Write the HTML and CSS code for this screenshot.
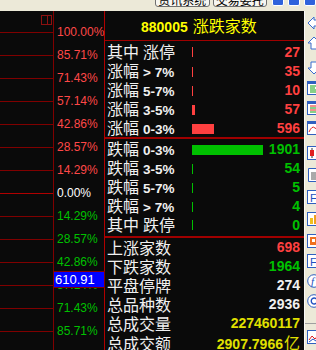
FILE: index.html
```html
<!DOCTYPE html>
<html lang="zh-CN">
<head>
  <meta charset="UTF-8" />
  <title>涨跌家数</title>
  <link rel="stylesheet" href="styles.css">
</head>
<body>
<div class="topbar">
  <span class="btn b1">资讯系统</span>
  <span class="btn b2">交易委托</span>
  <span class="winbtns"><i></i><i></i><i></i></span>
</div>
<div class="main">
  <div class="chart">
    <div class="sel"><span></span></div>
    <div class="grid">
      <div></div><div></div><div></div><div></div><div></div><div></div><div></div>
      <div class="mid"></div><div></div><div></div><div></div><div></div><div></div><div></div>
    </div>
  </div>
  <div class="scale">
    <div class="up">100.00%</div>
    <div class="up">85.71%</div>
    <div class="up">71.43%</div>
    <div class="up">57.14%</div>
    <div class="up">42.86%</div>
    <div class="up">28.57%</div>
    <div class="up">14.29%</div>
    <div class="zero">0.00%</div>
    <div class="dn">14.29%</div>
    <div class="dn">28.57%</div>
    <div class="dn">42.86%</div>
    <div class="dn">57.14%</div>
    <div class="dn">71.43%</div>
    <div class="dn">85.71%</div>
    <div class="cursor">610.91</div>
  </div>
  <div class="panel">
    <div class="head"><b>880005</b><span class="cn">涨跌家数</span></div>
    <div class="sec s1">
      <div class="row"><span><span class="cn">其中</span><span class="cn sp">涨停</span></span><i class="bar red" style="width:1px"></i><b class="num red">27</b></div>
      <div class="row"><span><span class="cn">涨幅</span><b class="rng">&gt; 7%</b></span><i class="bar red" style="width:1px"></i><b class="num red">35</b></div>
      <div class="row"><span><span class="cn">涨幅</span><b class="rng">5-7%</b></span><i class="bar red" style="width:1px"></i><b class="num red">10</b></div>
      <div class="row"><span><span class="cn">涨幅</span><b class="rng">3-5%</b></span><i class="bar red" style="width:3px"></i><b class="num red">57</b></div>
      <div class="row"><span><span class="cn">涨幅</span><b class="rng">0-3%</b></span><i class="bar red" style="width:22px"></i><b class="num red">596</b></div>
    </div>
    <div class="sec s2">
      <div class="row"><span><span class="cn">跌幅</span><b class="rng">0-3%</b></span><i class="bar green" style="width:71px"></i><b class="num green">1901</b></div>
      <div class="row"><span><span class="cn">跌幅</span><b class="rng">3-5%</b></span><i class="bar green" style="width:1px"></i><b class="num green">54</b></div>
      <div class="row"><span><span class="cn">跌幅</span><b class="rng">5-7%</b></span><i class="bar green" style="width:1px"></i><b class="num green">5</b></div>
      <div class="row"><span><span class="cn">跌幅</span><b class="rng">&gt; 7%</b></span><i class="bar green" style="width:1px"></i><b class="num green">4</b></div>
      <div class="row"><span><span class="cn">其中</span><span class="cn sp">跌停</span></span><i class="bar green" style="width:1px"></i><b class="num green">0</b></div>
    </div>
    <div class="sec s3">
      <div class="row sum"><span class="cn">上涨家数</span><b class="num red">698</b></div>
      <div class="row sum"><span class="cn">下跌家数</span><b class="num green">1964</b></div>
      <div class="row sum"><span class="cn">平盘停牌</span><b class="num white">274</b></div>
      <div class="row sum"><span class="cn">总品种数</span><b class="num white">2936</b></div>
      <div class="row sum"><span class="cn">总成交量</span><b class="num yellow">227460117</b></div>
      <div class="row sum"><span class="cn">总成交额</span><b class="num yellow">2907.7966<span class="cn">亿</span></b></div>
    </div>
  </div>
  <div class="tools">
    <svg viewBox="0 0 14 14"><path d="M1 7L7 1V4H13V10H7V13Z" fill="#fff" stroke="#3a6cd0"/></svg>
    <svg viewBox="0 0 14 14"><path d="M7 1L13 7H10V13H4V7H1Z" fill="#fff" stroke="#3a6cd0"/></svg>
    <svg class="g" viewBox="0 0 14 14"><path d="M4 1H10V7H13L7 13L1 7H4Z" fill="#fff" stroke="#3a6cd0"/></svg>
    <svg viewBox="0 0 14 14"><rect x="0.5" y="0.5" width="13" height="13" fill="#fff" stroke="#3060c0"/><rect x="1" y="1" width="12" height="2" fill="#3060c0"/><path d="M3 5H10M3 7H8M3 9H11M3 11H9" stroke="#10a010"/></svg>
    <svg viewBox="0 0 14 14"><rect x="0.5" y="0.5" width="13" height="13" fill="#fff" stroke="#3060c0"/><rect x="1" y="1" width="12" height="2" fill="#3060c0"/><path d="M3 5H10M3 9H10" stroke="#e02020"/><path d="M3 7H10M3 11H10" stroke="#10a010"/></svg>
    <svg viewBox="0 0 14 14"><rect x="0.5" y="0.5" width="13" height="13" fill="#fff" stroke="#3060c0"/><rect x="1" y="1" width="12" height="2" fill="#3060c0"/><path d="M2 11Q5 4 8 7T13 8" fill="none" stroke="#e02020"/></svg>
    <svg class="g" viewBox="0 0 14 14"><rect x="0.5" y="0.5" width="13" height="13" fill="#fff" stroke="#3060c0"/><path d="M5 2V12" stroke="#333"/><rect x="3" y="4" width="4" height="6" fill="#e02020"/><rect x="9" y="5" width="3" height="5" fill="#10a010"/></svg>
    <svg class="g2" viewBox="0 0 14 14"><path d="M1.5 0.5H10L12.5 3V13.5H1.5Z" fill="#fff" stroke="#3060c0"/><path d="M4 5H10M4 7H10M4 9H10M4 11H9" stroke="#555"/></svg>
    <svg class="g2" viewBox="0 0 14 14"><rect x="0.5" y="0.5" width="13" height="13" fill="#fff" stroke="#3060c0"/><text x="3" y="11.5" font-family="Liberation Sans" font-size="11" fill="#2050c0">F</text></svg>
    <svg class="g2" viewBox="0 0 14 14"><rect x="0.5" y="0.5" width="13" height="13" fill="#fff" stroke="#3060c0"/><rect x="3" y="6" width="3" height="6" fill="#f0c020"/><rect x="7" y="3" width="3" height="9" fill="#f0a020"/></svg>
    <svg class="g2" viewBox="0 0 14 14"><rect x="0.5" y="0.5" width="13" height="13" fill="#fff" stroke="#3060c0"/><rect x="3" y="3" width="7" height="8" fill="#f07020"/><rect x="5" y="5" width="3" height="3" fill="#fff"/></svg>
    <svg viewBox="0 0 14 14"><rect x="0.5" y="0.5" width="13" height="13" fill="#fff" stroke="#3060c0"/><text x="3" y="11.5" font-family="Liberation Sans" font-size="11" fill="#2050c0">F</text></svg>
    <svg viewBox="0 0 14 14"><circle cx="7" cy="7" r="6.3" fill="#fff" stroke="#3060c0"/><text x="4" y="11" font-family="Liberation Serif" font-style="italic" font-size="11" fill="#2050c0">f</text></svg>
    <svg viewBox="0 0 14 14"><circle cx="7" cy="7" r="6.3" fill="#fff" stroke="#3060c0"/><path d="M9.5 5A3 3 0 1 0 9.5 9" fill="none" stroke="#2050c0" stroke-width="1.4"/></svg>
    <span class="sep"></span>
    <svg viewBox="0 0 14 14"><rect x="0.5" y="0.5" width="13" height="13" fill="#fff" stroke="#3060c0"/><path d="M2 10L5 6L8 9L12 4" fill="none" stroke="#e02020"/><path d="M2 12L6 9L9 11L12 8" fill="none" stroke="#2050c0"/></svg>
  </div>
</div>
</body>
</html>
```

FILE: styles.css
```css
* {
  box-sizing: border-box;
}
body {
  margin: 0;
  width: 316px;
  height: 350px;
  overflow: hidden;
  background: #0a0a0a;
  font-family: "Liberation Sans", Arial, sans-serif;
}
.cn {
  font-family: "Noto Sans CJK SC", sans-serif;
  font-size: 16px;
  font-weight: normal;
}

/* window strip */
.topbar {
  height: 11px;
  background: #ece9d8;
  display: flex;
  align-items: flex-start;
  overflow: hidden;
}
.btn {
  width: 57px;
  height: 20px;
  margin-top: -13px;
  padding-top: 6px;
  border: 1px solid #6f6f6f;
  border-radius: 3px;
  background: #f7f6f1;
  color: #000;
  font: 12px/12px "Noto Sans CJK SC", sans-serif;
  text-align: center;
}
.b1 { margin-left: 155px; }
.b2 { margin-left: 3px; }
.winbtns {
  display: flex;
  gap: 4px;
  margin-left: 5px;
}
.winbtns i {
  width: 12px;
  height: 13px;
  margin-top: -7px;
  background: #2f62dc;
  border: 1px solid #fff;
  border-radius: 2px;
}

.main {
  display: flex;
  height: 339px;
}

/* chart grid on the left */
.chart {
  width: 54px;
  border-right: 1px solid #800000;
}
.sel {
  width: 11px;
  height: 10px;
  margin: 4px 0 0 41px;
  border: 1px solid #8c1010;
}
.sel span {
  display: block;
  width: 6px;
  height: 100%;
  border-right: 1px solid #8c1010;
}
.grid {
  margin-top: 7px;
}
.grid div {
  height: 23px;
  border-top: 1px solid #800000;
}
.grid .mid {
  border-top-color: #b00000;
}

/* percent scale */
.scale {
  width: 50px;
  position: relative;
  padding: 10px 0 0 3px;
  font-size: 12px;
}
.scale div {
  height: 23px;
  line-height: 23px;
  white-space: nowrap;
}
.up { color: #ff4848; }
.dn { color: #00c000; }
.zero { color: #fff; }
.scale .cursor {
  position: absolute;
  top: 260px;
  left: -1px;
  width: 52px;
  height: 17px;
  padding-left: 1px;
  background: #0000ff;
  border: 1px solid #800000;
  color: #fff;
  font-size: 13px;
  line-height: 15px;
}

/* stats panel */
.panel {
  width: 200px;
  border-left: 1px solid #b00000;
  padding: 0 4px 0 2px;
  color: #f0f0f0;
}
.head {
  height: 30px;
  border-bottom: 1px solid #a00000;
  margin: 0 -4px 0 -2px;
  padding-left: 36px;
  line-height: 29px;
  color: #ffff00;
  white-space: nowrap;
}
.head b {
  font-size: 14px;
  margin-right: 5px;
}
.sec {
  margin: 0 -4px 0 -2px;
  padding: 0 4px 0 2px;
}
.s1 {
  padding-top: 1px;
  border-bottom: 2px solid #a00000;
}
.s2 {
  padding-bottom: 2px;
  border-bottom: 2px solid #a00000;
}
.row {
  height: 19px;
  display: grid;
  grid-template-columns: 85px 1fr auto;
  align-items: center;
  line-height: 19px;
  white-space: nowrap;
}
.row.sum {
  grid-template-columns: 1fr auto;
}
.sp {
  margin-left: 4px;
}
.rng {
  margin-left: 4px;
  font-size: 13.5px;
}
.bar {
  display: block;
  height: 10px;
}
.num {
  font-size: 14px;
  text-align: right;
}
.num .cn {
  margin-left: 1px;
}
.red { color: #ff4040; }
.bar.red { background: #ff4040; }
.green { color: #00c000; }
.bar.green { background: #00c000; }
.white { color: #f0f0f0; }
.yellow { color: #e0e000; }

/* side toolbar */
.tools {
  width: 12px;
  background: #ece9d8;
  border-left: 1px solid #fafafa;
  overflow: hidden;
  display: flex;
  flex-direction: column;
  gap: 6px;
  padding-top: 5px;
}
.tools svg {
  flex: none;
  width: 14px;
  height: 14px;
  margin-left: 2px;
}
.tools .g { margin-top: 5px; }
.tools .g2 { margin-top: 2px; }
.sep {
  flex: none;
  height: 1px;
  margin-top: 9px;
  background: #a0a0a0;
}
```
